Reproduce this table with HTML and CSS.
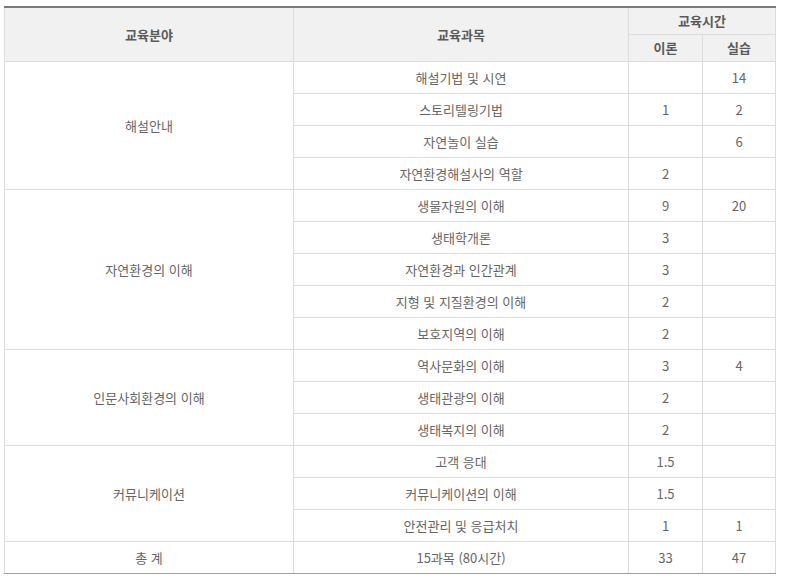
FILE: index.html
```html
<!DOCTYPE html>
<html lang="ko">
<head>
<meta charset="utf-8">
<link rel="stylesheet" href="styles.css">
</head>
<body>
<table class="edu">
  <colgroup>
    <col class="c1"><col class="c2"><col class="c3"><col class="c4">
  </colgroup>
  <thead>
    <tr class="h1">
      <th rowspan="2">교육분야</th>
      <th rowspan="2">교육과목</th>
      <th colspan="2">교육시간</th>
    </tr>
    <tr class="h2">
      <th>이론</th>
      <th>실습</th>
    </tr>
  </thead>
  <tbody>
    <tr><td rowspan="4">해설안내</td><td>해설기법 및 시연</td><td></td><td>14</td></tr>
    <tr><td>스토리텔링기법</td><td>1</td><td>2</td></tr>
    <tr><td>자연놀이 실습</td><td></td><td>6</td></tr>
    <tr><td>자연환경해설사의 역할</td><td>2</td><td></td></tr>
    <tr><td rowspan="5">자연환경의 이해</td><td>생물자원의 이해</td><td>9</td><td>20</td></tr>
    <tr><td>생태학개론</td><td>3</td><td></td></tr>
    <tr><td>자연환경과 인간관계</td><td>3</td><td></td></tr>
    <tr><td>지형 및 지질환경의 이해</td><td>2</td><td></td></tr>
    <tr><td>보호지역의 이해</td><td>2</td><td></td></tr>
    <tr><td rowspan="3">인문사회환경의 이해</td><td>역사문화의 이해</td><td>3</td><td>4</td></tr>
    <tr><td>생태관광의 이해</td><td>2</td><td></td></tr>
    <tr><td>생태복지의 이해</td><td>2</td><td></td></tr>
    <tr><td rowspan="3">커뮤니케이션</td><td>고객 응대</td><td>1.5</td><td></td></tr>
    <tr><td>커뮤니케이션의 이해</td><td>1.5</td><td></td></tr>
    <tr><td>안전관리 및 응급처치</td><td>1</td><td>1</td></tr>
    <tr class="total"><td>총 계</td><td>15과목 (80시간)</td><td>33</td><td>47</td></tr>
  </tbody>
</table>
</body>
</html>
```
FILE: styles.css
```css
html, body {
  margin: 0;
  padding: 0;
  background: #fff;
}
body {
  padding: 6px 0 0 4px;
  font-family: "Noto Sans CJK KR", "Noto Sans", sans-serif;
  font-size: 13px;
  color: #666;
}
.edu {
  border-collapse: collapse;
  table-layout: fixed;
  width: 771px;
  border-top: 2px solid #7a7a7a;
  border-bottom: 1px solid #a0a0a0;
}
.c1 { width: 289px; }
.c2 { width: 335px; }
.c3 { width: 74px; }
.c4 { width: 73px; }
.edu th, .edu td {
  border: 1px solid #dcdcdc;
  text-align: center;
  vertical-align: middle;
  padding: 0;
  line-height: 16px;
}
.edu th {
  background: #f1f1f1;
  color: #5a5a5a;
  font-weight: 700;
  font-size: 13px;
}
.edu .h1 th { height: 26px; }
.edu .h2 th { height: 26px; }
.edu td {
  height: 31px;
  color: #666;
}
.edu tr:first-child th { border-top: 2px solid #7a7a7a; }
.edu .total td { border-bottom: 1px solid #a0a0a0; }
```
